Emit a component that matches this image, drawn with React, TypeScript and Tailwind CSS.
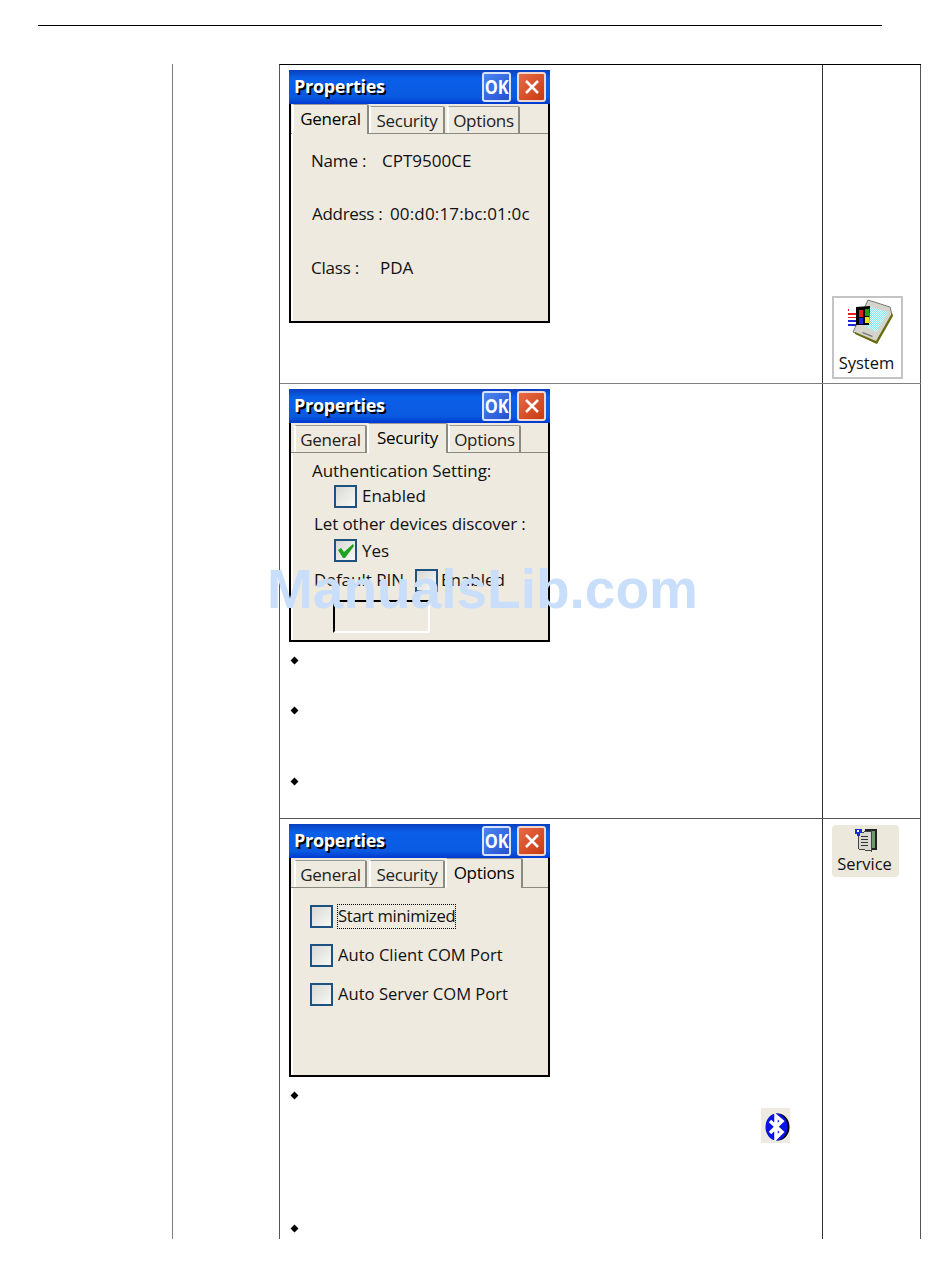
import type { ReactNode } from 'react'

const TABS = ['General', 'Security', 'Options'] as const
type TabName = (typeof TABS)[number]

// each state has its own offsets, the active tab overlaps its neighbours
const TAB_CLASSES: Record<TabName, Record<TabName, string>> = {
  General: { General: 'ml-[1px] w-[77px]', Security: 'w-[76px]', Options: 'ml-[2px] w-[73px]' },
  Security: { General: 'ml-[3px] w-[73px]', Security: 'ml-[0px] w-[81px]', Options: 'w-[73px]' },
  Options: { General: 'ml-[3px] w-[73px]', Security: 'ml-[2px] w-[76px]', Options: 'w-[78px]' }
}

function Tab ({ label, active, className }: { label: string, active: boolean, className: string }) {
  if (active) {
    return (
      <div className={`${className} relative z-10 h-[30px] -mb-[1px] bg-[#eeeadf] border-t border-l-2 border-l-white border-t-[#999] border-r-2 border-r-[#8a8a80] rounded-t-[2px] flex items-center justify-center pb-[3px] text-black tracking-[-0.3px]`}>
        {label}
      </div>
    )
  }
  return (
    <div className={`${className} h-[27px] bg-[#eeeadf] border-t border-l-2 border-l-white border-t-[#999] border-r-2 border-r-[#8a8a80] rounded-t-[2px] flex items-center justify-center text-[#222] tracking-[-0.3px]`}>
      {label}
    </div>
  )
}

function Dialog ({ active, children }: { active: TabName, children: ReactNode }) {
  return (
    <div className="w-[261px] h-[253px] border-2 border-t-0 border-black bg-[#eeeadf] flex flex-col">
      <div className="-mx-[2px] h-[34px] shrink-0 flex items-center pl-[5px] pr-[4px] bg-[linear-gradient(180deg,#0a3fc0_0%,#0a5fe8_25%,#0a5ae0_80%,#0038d0_100%)]">
        <span className="-mt-[2px] font-bold text-[18px] leading-none text-white [text-shadow:2px_2px_0_#000] tracking-[-0.3px]">Properties</span>
        <div className="ml-auto w-[29px] h-[30px] flex items-center justify-center border-2 border-[#d8e4ff] rounded-[3px] bg-[linear-gradient(135deg,#4a86f0_0%,#2450d0_100%)] text-white font-bold text-[20px] leading-none">
          <span className="scale-x-[0.82]">OK</span>
        </div>
        <div className="ml-[6px] w-[29px] h-[30px] flex items-center justify-center border-2 border-[#f0d8d0] rounded-[3px] bg-[linear-gradient(135deg,#e86a48_0%,#c83a10_100%)]">
          <svg width="16" height="16" viewBox="0 0 16 16"><path d="M2 2 L14 14 M14 2 L2 14" stroke="#fff" strokeWidth="2.5" /></svg>
        </div>
      </div>
      <div className="h-[30px] shrink-0 flex items-end border-b border-[#8a8a80] text-[17px] leading-none">
        {TABS.map(tab => (
          <Tab key={tab} label={tab} active={tab === active} className={TAB_CLASSES[active][tab]} />
        ))}
      </div>
      <div className="flex-1 border-l-2 border-white text-[17px] leading-none text-[#111] relative">
        {children}
      </div>
    </div>
  )
}

function CheckBox ({ checked }: { checked?: boolean }) {
  return (
    <div className="w-[23px] h-[23px] shrink-0 border-2 border-[#1c5180] bg-[linear-gradient(135deg,#d8d8d4_0%,#f8f8f6_100%)] flex items-center justify-center">
      {checked && (
        <svg width="18" height="18" viewBox="0 0 18 18"><path d="M1 8 L4 6 L7 10 L16 2 L17 4 L8 16 L6 16 Z" fill="#1fa21f" /></svg>
      )}
    </div>
  )
}

function Bullet ({ className }: { className: string }) {
  return <div className={`${className} w-[7px] h-[7px] bg-black rotate-45 scale-[0.8]`} />
}

function SystemIcon () {
  return (
    <svg width="48" height="46" viewBox="0 0 48 46">
      <defs>
        <pattern id="dither" width="2" height="2" patternUnits="userSpaceOnUse">
          <rect width="2" height="2" fill="#7fe8f4" />
          <rect width="1" height="1" fill="#e4fbff" />
          <rect x="1" y="1" width="1" height="1" fill="#e4fbff" />
        </pattern>
      </defs>
      <path d="M21 1 L43 8 L45 16 L29 44 L6 33 Z" fill="#d4d4cc" stroke="#777" />
      <path d="M45 14 L46 17 L30 45 L8 35 L8 33 L29 42 Z" fill="#6b6b10" />
      <path d="M23 8 L41 13 L29 33 L14 24 Z" fill="url(#dither)" />
      <path d="M9 8 L23 7 L22 26 L9 26 Z" fill="#000" />
      <path d="M12 11 h4 v7 h-4 Z" fill="#e0201c" />
      <path d="M18 10 h4 v7 h-4 Z" fill="#1aa01a" />
      <path d="M12 19 h4 v6 h-4 Z" fill="#1c28d8" />
      <path d="M18 18 h4 v6 h-4 Z" fill="#f0e020" />
      <path d="M1 10 h1 v2 h-1 Z M1 14 h8 v2 h-8 Z M1 18 h8 v1 h-8 Z" fill="#e0201c" />
      <path d="M1 21 h8 v2 h-8 Z M1 25 h8 v2 h-8 Z" fill="#1c28d8" />
      <path d="M16 33 L26 37 L25 38 L15 34 Z" fill="#777" />
    </svg>
  )
}

function ServiceIcon () {
  return (
    <svg width="24" height="24" viewBox="0 0 24 24" shapeRendering="crispEdges">
      <path d="M11 1 h12 v21 h-12 Z" fill="#222" />
      <path d="M18 3 h3 v17 h-3 Z" fill="#6f9a6a" />
      <path d="M4 5 L17 3 V23 L5 21 Z" fill="#d8d8d0" stroke="#444" strokeWidth="1" />
      <path d="M7 8 h7 v1 h-7 Z M7 11 h7 v1 h-7 Z M7 14 h7 v1 h-7 Z M7 17 h7 v1 h-7 Z" fill="#333" />
      <path d="M1 1 h7 v4 h-2 v3 h-3 v-2 h-2 Z" fill="#1a2ad8" />
      <path d="M3 2 h2 v2 h-2 Z" fill="#fff" />
    </svg>
  )
}

function BluetoothIcon () {
  return (
    <svg width="25" height="28" viewBox="0 0 25 28">
      <ellipse cx="13" cy="14" rx="11.5" ry="13.5" fill="#000" />
      <ellipse cx="11.5" cy="14" rx="11" ry="13.5" fill="#0a12e8" />
      <path d="M5 8 L17 19 L11 25 V3 L17 8 L5 20" fill="none" stroke="#fff" strokeWidth="3.5" />
    </svg>
  )
}

export default function App () {
  return (
    <div className="relative w-[950px] h-[1284px] bg-white overflow-hidden font-['Open_Sans',sans-serif]">
      <div className="pt-[25px] pl-[38px]">
        <div className="w-[844px] h-[1px] bg-black" />
      </div>

      <div className="mt-[38px] flex h-[1175px]">
        <div className="w-[172px] shrink-0" />
        <div className="w-[107px] shrink-0 border-l border-[#808080]" />

        <div className="w-[642px] shrink-0 flex flex-col border-l border-t border-[#555] border-t-black">
          {/* row 1 */}
          <div className="h-[319px] shrink-0 flex border-b border-[#808080]">
            <div className="w-[542px] shrink-0 pl-[9px] pt-[5px]">
              <Dialog active="General">
                <div className="pl-[18px] pt-[16px] flex flex-col">
                  <div className="flex h-[20px] items-center"><span className="w-[71px] tracking-[-0.2px]">Name :</span><span>CPT9500CE</span></div>
                  <div className="mt-[33px] flex h-[20px] items-center pl-[1px]"><span className="w-[78px] tracking-[-0.3px]">Address :</span><span className="tracking-[0.15px]">00:d0:17:bc:01:0c</span></div>
                  <div className="mt-[34px] flex h-[20px] items-center"><span className="w-[69px] tracking-[-0.2px]">Class :</span><span>PDA</span></div>
                </div>
              </Dialog>
            </div>
            <div className="w-[99px] shrink-0 border-l border-r border-[#333] border-r-[#555] pl-[9px] pt-[231px]">
              <div className="w-[71px] h-[83px] border-2 border-[#c4c4c4] flex flex-col items-center">
                <div className="mt-[1px] ml-[6px]"><SystemIcon /></div>
                <span className="mt-[10px] -ml-[2px] text-[16.5px] leading-none text-[#111]">System</span>
              </div>
            </div>
          </div>

          {/* row 2 */}
          <div className="h-[435px] shrink-0 flex border-b border-[#555]">
            <div className="w-[542px] shrink-0 pl-[9px] pt-[5px]">
              <Dialog active="Security">
                <div className="pt-[8px] flex flex-col">
                  <div className="pl-[19px] h-[18px] flex items-center tracking-[-0.05px]">Authentication Setting:</div>
                  <div className="mt-[6px] pl-[41px] flex items-center gap-[5px]"><CheckBox /><span className="-mt-[2px]">Enabled</span></div>
                  <div className="mt-[6px] pl-[21px] h-[18px] flex items-center tracking-[-0.1px]">Let other devices discover :</div>
                  <div className="mt-[7px] pl-[41px] flex items-center gap-[5px]"><CheckBox checked /><span>Yes</span></div>
                  <div className="mt-[7px] pl-[21px] flex items-center"><span className="w-[101px] -mt-[2px]">Default PIN</span><CheckBox /><span className="ml-[3px] -mt-[2px]">Enabled</span></div>
                  <div className="mt-[8px] ml-[40px] w-[97px] h-[33px] border-2 border-l-black border-t-black border-r-white border-b-white" />
                </div>
              </Dialog>
              <div className="pl-[2px]">
                <Bullet className="mt-[15px]" />
                <Bullet className="mt-[43px]" />
                <Bullet className="mt-[64px]" />
              </div>
            </div>
            <div className="w-[99px] shrink-0 border-l border-r border-[#333] border-r-[#555]" />
          </div>

          {/* row 3 */}
          <div className="flex-1 flex">
            <div className="w-[542px] shrink-0 pl-[9px] pt-[5px]">
              <Dialog active="Options">
                <div className="pl-[17px] pt-[16px] flex flex-col text-[16.6px]">
                  <div className="flex items-center">
                    <CheckBox />
                    <span className="ml-[4px] h-[25px] w-[119px] border border-dotted border-black flex items-center whitespace-nowrap tracking-[-0.3px]">Start minimized</span>
                  </div>
                  <div className="mt-[15px] flex items-center"><CheckBox /><span className="ml-[5px]">Auto Client COM Port</span></div>
                  <div className="mt-[16px] flex items-center"><CheckBox /><span className="ml-[5px]">Auto Server COM Port</span></div>
                </div>
              </Dialog>
              <div className="relative pl-[2px]">
                <Bullet className="mt-[15px]" />
                <div className="absolute left-[472px] top-[16px] w-[29px] h-[35px] bg-[#eeeadf] pl-[4px] pt-[5px]"><BluetoothIcon /></div>
                <Bullet className="mt-[126px]" />
              </div>
            </div>
            <div className="w-[99px] shrink-0 border-l border-r border-[#333] border-r-[#555] pl-[9px] pt-[6px]">
              <div className="w-[67px] h-[52px] rounded-[4px] bg-[#ece9dc] flex flex-col items-center">
                <div className="mt-[3px] ml-[1px]"><ServiceIcon /></div>
                <span className="mt-[4px] -ml-[2px] text-[16.5px] leading-none text-[#111]">Service</span>
              </div>
            </div>
          </div>
        </div>
      </div>

      <div className="absolute left-[267px] top-[555px] font-['Liberation_Sans',sans-serif] font-bold text-[55px] leading-[68px] text-[#c9defa] whitespace-nowrap">ManualsLib.com</div>
    </div>
  )
}
